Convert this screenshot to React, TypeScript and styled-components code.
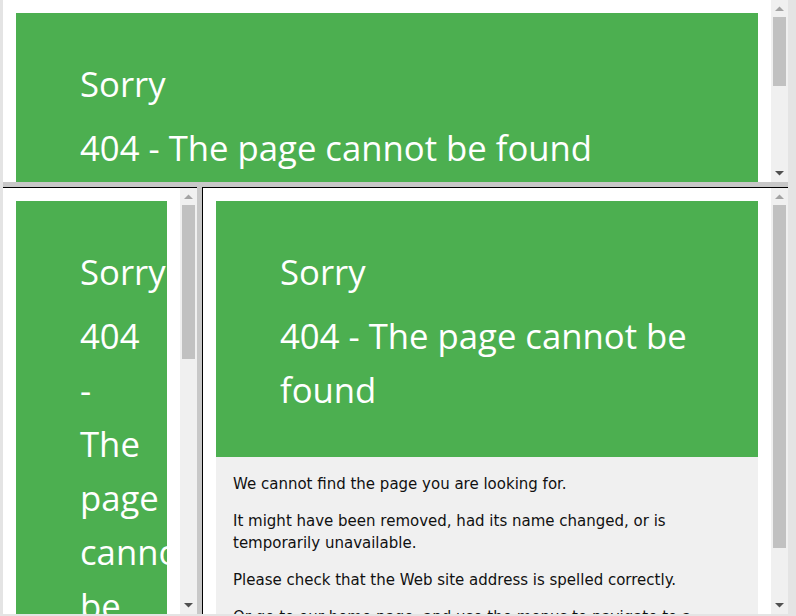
import React from "react";
import styled, { createGlobalStyle } from "styled-components";

const Global = createGlobalStyle`
  html, body { margin: 0; padding: 0; }
  body { background: #e4e4e4; overflow: hidden; }
  * { box-sizing: border-box; }
`;

const Window = styled.div`
  width: 796px;
  height: 616px;
  padding: 0 8px 2px 3px;
  background: #e4e4e4;
  display: flex;
`;

const Frameset = styled.div`
  flex: 1;
  display: flex;
  flex-direction: column;
  gap: 5px;
  background: #c8c8c8;
`;

const BottomRow = styled.div`
  flex: 1;
  min-height: 0;
  display: flex;
  gap: 5px;
  background: #c8c8c8;
`;

const FrameBox = styled.div<{ $h?: number; $w?: number; $top?: boolean; $left?: boolean }>`
  display: flex;
  background: #fff;
  ${(p) => (p.$h ? `height: ${p.$h}px;` : "flex: 1; min-height: 0;")}
  ${(p) => (p.$w ? `width: ${p.$w}px; flex: none;` : "")}
  ${(p) => (p.$top ? "border-top: 1px solid #000;" : "")}
  ${(p) => (p.$left ? "border-left: 1px solid #000;" : "")}
`;

const Viewport = styled.div`
  flex: 1;
  min-width: 0;
  overflow: hidden;
  padding: 13px;
  background: #fff;
`;

const Track = styled.div`
  width: 17px;
  flex: none;
  background: #f0f0f0;
  display: flex;
  flex-direction: column;
  align-items: center;
`;

const ArrowCell = styled.div`
  height: 17px;
  width: 17px;
  display: flex;
  align-items: center;
  justify-content: center;
  flex: none;
`;

const Thumb = styled.div<{ $len: number }>`
  width: 13px;
  height: ${(p) => p.$len}px;
  background: #c1c1c1;
  flex: none;
`;

const Spacer = styled.div`
  flex: 1;
`;

const Arrow = ({ up }: { up?: boolean }) => (
  <ArrowCell>
    <svg width="9" height="5" viewBox="0 0 9 5">
      {up ? (
        <polygon points="0,5 9,5 4.5,0.5" fill="#a3a3a3" />
      ) : (
        <polygon points="0,0 9,0 4.5,4.5" fill="#505050" />
      )}
    </svg>
  </ArrowCell>
);

const Scrollbar = ({ thumb }: { thumb: number }) => (
  <Track>
    <Arrow up />
    <Thumb $len={thumb} />
    <Spacer />
    <Arrow />
  </Track>
);

const Card = styled.div`
  width: 100%;
`;

const Header = styled.div`
  background: #4caf50;
  color: #fff;
  padding: 44px 44px 40px 64px;
  overflow: hidden;
`;

const Title = styled.div<{ $gap?: number }>`
  font-family: "Segoe UI", "Open Sans", sans-serif;
  font-size: 34.7px;
  line-height: 54px;
  margin: 0 0 ${(p) => p.$gap ?? 0}px 0;
`;

const Content = styled.div`
  background: #f0f0f0;
  padding: 16px 17px 20px 17px;
`;

const Para = styled.p`
  font-family: "DejaVu Sans", Verdana, sans-serif;
  font-size: 15px;
  line-height: 22px;
  color: #111;
  margin: 0 0 15px 0;
`;

const ErrorPage = () => (
  <Card>
    <Header>
      <Title $gap={10}>Sorry</Title>
      <Title>404 - The page cannot be found</Title>
    </Header>
    <Content>
      <Para>We cannot find the page you are looking for.</Para>
      <Para>It might have been removed, had its name changed, or is temporarily unavailable.</Para>
      <Para>Please check that the Web site address is spelled correctly.</Para>
      <Para>Or go to our home page, and use the menus to navigate to a specific page.</Para>
    </Content>
  </Card>
);

const Frame = ({
  h,
  w,
  top,
  left,
  thumb,
}: {
  h?: number;
  w?: number;
  top?: boolean;
  left?: boolean;
  thumb: number;
}) => (
  <FrameBox $h={h} $w={w} $top={top} $left={left}>
    <Viewport>
      <ErrorPage />
    </Viewport>
    <Scrollbar thumb={thumb} />
  </FrameBox>
);

export default function App() {
  return (
    <>
      <Global />
      <Window>
        <Frameset>
          <Frame h={182} thumb={69} />
          <BottomRow>
            <Frame w={194} top thumb={154} />
            <Frame top left thumb={343} />
          </BottomRow>
        </Frameset>
      </Window>
    </>
  );
}
